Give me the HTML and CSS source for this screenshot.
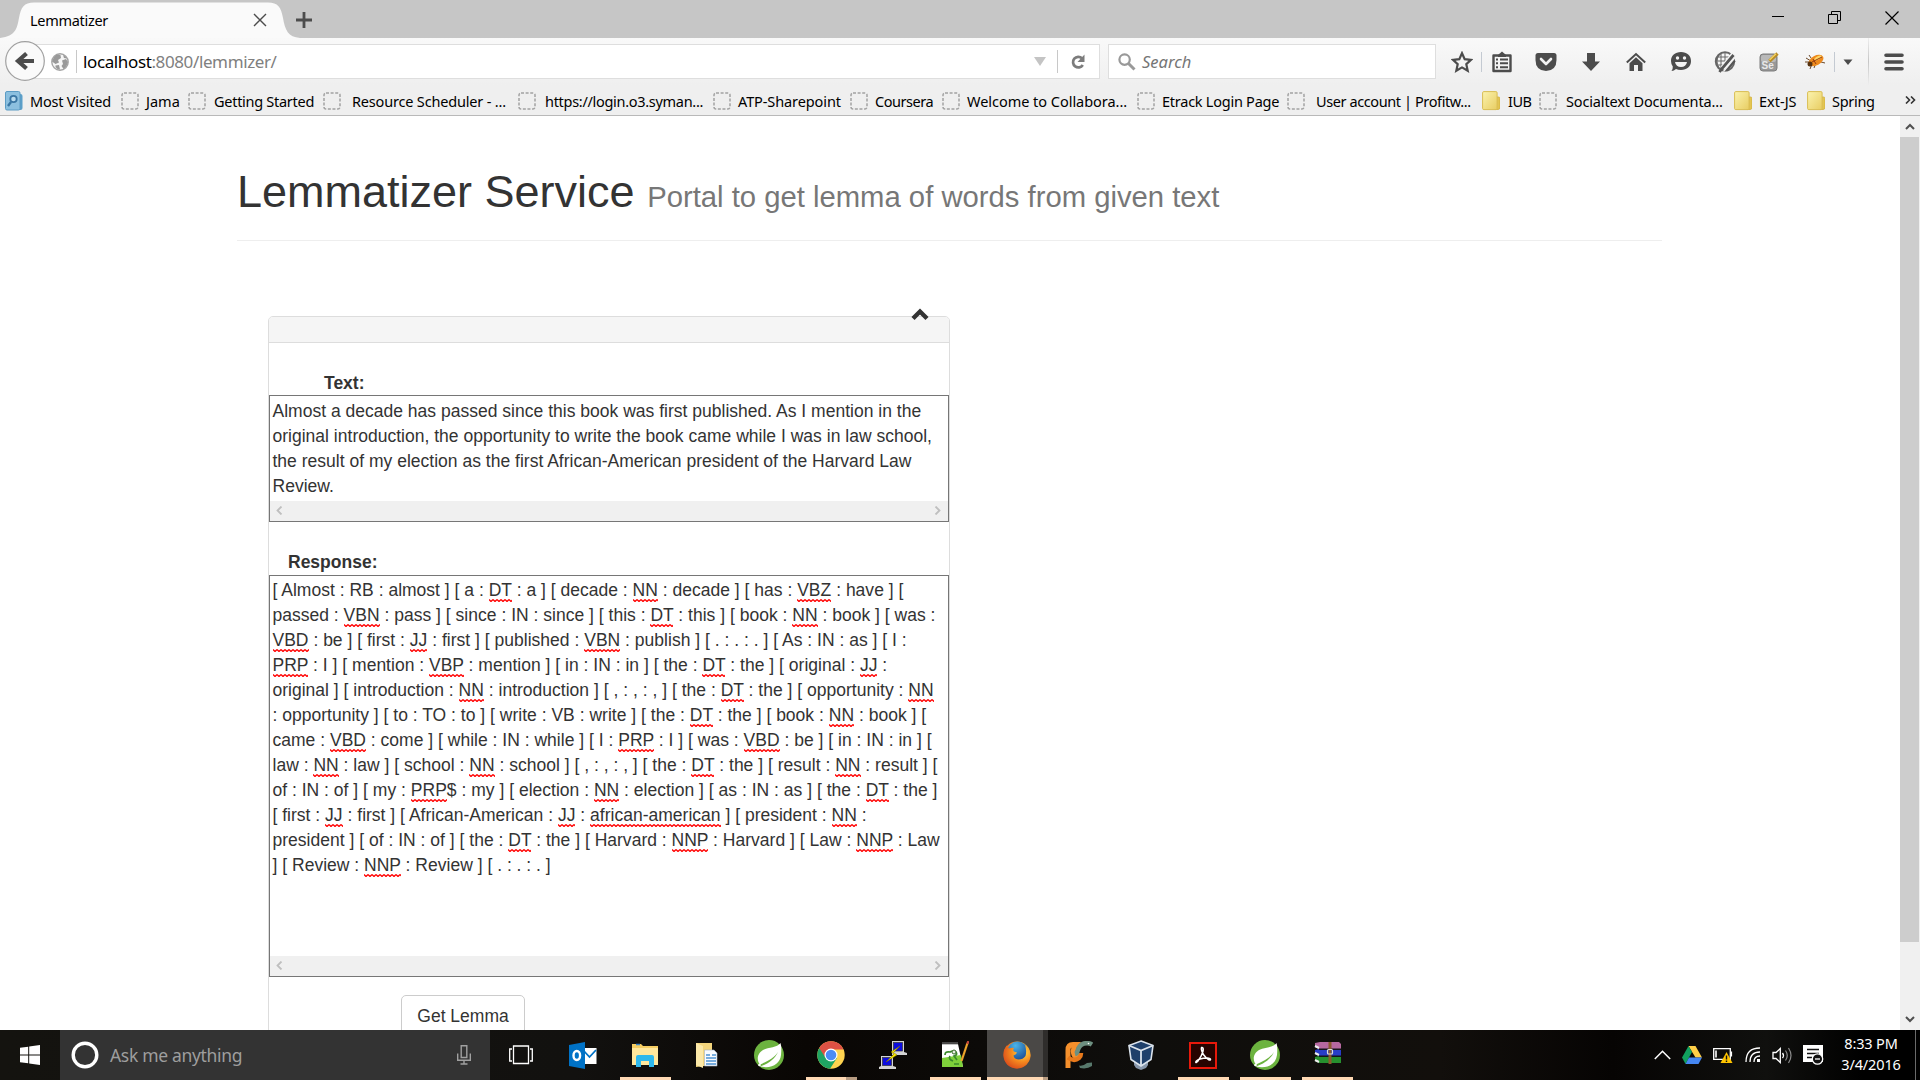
FILE: index.html
```html
<!DOCTYPE html>
<html lang="en">
<head>
<meta charset="utf-8">
<title>Lemmatizer</title>
<link rel="stylesheet" href="styles.css">
</head>
<body>
<svg class="defs" width="0" height="0">
  <defs>
    <linearGradient id="fold" x1="0" y1="0" x2="1" y2="1"><stop offset="0" stop-color="#fbf3ae"/><stop offset="1" stop-color="#e8cd62"/></linearGradient>
    <radialGradient id="fox" cx=".7" cy=".3" r=".9"><stop offset="0" stop-color="#ffe14a"/><stop offset=".45" stop-color="#f58a1f"/><stop offset="1" stop-color="#d13a1a"/></radialGradient>
    <radialGradient id="globe" cx=".4" cy=".2" r=".9"><stop offset="0" stop-color="#4bb4e8"/><stop offset="1" stop-color="#123a86"/></radialGradient>
    <symbol id="folder" viewBox="0 0 18 20"><path d="M14 6h2.500q1.500 0 1.500 1.500v9q0 2-2 2h-3z" fill="#e3c552" stroke="#cfae3e" stroke-width=".8"/><rect x=".6" y=".6" width="14.500" height="18" rx="1.200" fill="url(#fold)" stroke="#d9bd52" stroke-width="1"/></symbol>
    <symbol id="blank" viewBox="0 0 18 18"><rect x="1" y="1" width="16" height="16" rx="2" fill="none" stroke="#a3a3a3" stroke-width="1.500" stroke-dasharray="3 1.600"/></symbol>
    <symbol id="leaf" viewBox="0 0 30 30"><circle cx="15" cy="15" r="15" fill="#6cb33f"/><path d="M26.500 3C23 8 15 7 9 10C1 15 4 23 6 24.500C14 21 20 18 24 12C21 19 14 24 6 26.500C18 29 26 24 27 15C27.500 10 27.500 6 26.500 3Z" fill="#fff"/><circle cx="5.500" cy="25" r="1.300" fill="#fff"/></symbol>
  </defs>
</svg>
<div class="screen">
  <header class="titlebar">
    <div class="tab">
      <svg class="tab-shape" width="304" height="38" viewBox="0 0 304 38"><path d="M0 38C16 36 17 28 19 18C21 7 24 2.500 34 2.500H268C278 2.500 281 7 283 18C285 30 288 37 300 38Z" fill="#fafafa"/></svg>
      <span class="tab-title">Lemmatizer</span>
      <svg class="tab-close" width="14" height="14" viewBox="0 0 14 14"><path d="M1 1L13 13M13 1L1 13" stroke="#4c4c4c" stroke-width="1.400"/></svg>
    </div>
    <svg class="new-tab" width="16" height="16" viewBox="0 0 16 16"><path d="M8 0V16M0 8H16" stroke="#4c4c4c" stroke-width="2.800"/></svg>
    <div class="win-controls">
      <svg width="12" height="11" viewBox="0 0 12 11"><path d="M0 5.500H12" stroke="#000"/></svg>
      <svg width="13" height="13" viewBox="0 0 13 13"><path d="M.5 3.500H9.500V12.500H.5ZM3.500 3V.5H12.500V9.500H10" fill="none" stroke="#000"/></svg>
      <svg width="14" height="14" viewBox="0 0 14 14"><path d="M.5 .5L13.500 13.500M13.500 .5L.5 13.500" stroke="#000" stroke-width="1.200"/></svg>
    </div>
  </header>

  <div class="navbar">
    <svg class="back" width="42" height="42" viewBox="0 0 42 42"><circle cx="21" cy="21" r="19.300" fill="#fafafa" stroke="#a0a0a0" stroke-width="1.200"/><path d="M22.500 13.500L14 21L22.500 28.500M14.500 21H30" fill="none" stroke="#4c4c4c" stroke-width="4.200"/></svg>
    <div class="urlbar">
      <svg class="site" width="18" height="18" viewBox="0 0 18 18"><circle cx="9" cy="9" r="8.200" fill="#f5f5f5" stroke="#a5a5a5" stroke-width="1.400"/><path d="M3 4Q6 .5 9.500 2L10 5L7 7L8 9.500L4.500 11L1 8.500ZM11 7.500L15 6L17 9Q16 14 12.500 16L10.500 13L12 11ZM4.500 12.500L8 12L9 16.500Q6 16.500 4.500 14ZM12 2Q15 3 16 5.500L13 5Z" fill="#999"/></svg>
      <span class="sep"></span>
      <span class="url"><span class="host">localhost</span>:8080/lemmizer/</span>
      <svg class="drop" width="12" height="9" viewBox="0 0 12 9"><path d="M0 0H12L6 9Z" fill="#c4c4c4"/></svg>
      <span class="sep"></span>
      <svg class="reload" width="16" height="16" viewBox="0 0 16 16"><path d="M12 4.300A5.300 5.300 0 1 0 12.800 11" fill="none" stroke="#7c7c7c" stroke-width="2.700"/><path d="M14.500 .5V8H7.500Z" fill="#7c7c7c"/></svg>
    </div>
    <div class="searchbox">
      <svg width="18" height="18" viewBox="0 0 18 18"><circle cx="6.600" cy="6.600" r="5.200" fill="none" stroke="#999" stroke-width="2.200"/><path d="M10.500 10.500L16.500 16.500" stroke="#999" stroke-width="3"/></svg>
      <span>Search</span>
    </div>
    <div class="tools">
      <svg class="t-star" width="22" height="22" viewBox="0 0 22 22"><path d="M11 2.200L13.700 8.200L20 8.900L15.300 13.200L16.700 19.700L11 16.400L5.300 19.700L6.700 13.200L2 8.900L8.300 8.200Z" fill="none" stroke="#4c4c4c" stroke-width="2.200"/></svg>
      <span class="tsep"></span>
      <svg class="t-list" width="20" height="22" viewBox="0 0 20 22"><path d="M1.500 4.500H18.500V20H1.500Z" fill="none" stroke="#4c4c4c" stroke-width="2.400" stroke-linejoin="round"/><path d="M6 4L10 .5L14 4V6H6Z" fill="#4c4c4c"/><path d="M4 8.500H6M8 8.500H16M4 12.300H6M8 12.300H16M4 16.300H6M8 16.300H16" stroke="#4c4c4c" stroke-width="2"/></svg>
      <svg class="t-pocket" width="22" height="20" viewBox="0 0 22 20"><path d="M3 1H19Q21.500 1 21.500 3.500V8Q21.500 18.500 11 19Q.5 18.500 .5 8V3.500Q.5 1 3 1Z" fill="#4c4c4c"/><path d="M6 7L11 12L16 7" fill="none" stroke="#f3f3f3" stroke-width="2.600" stroke-linecap="round" stroke-linejoin="round"/></svg>
      <svg class="t-down" width="20" height="20" viewBox="0 0 20 20"><path d="M6 1H14V9.500H19L10 19L1 9.500H6Z" fill="#4c4c4c"/></svg>
      <svg class="t-home" width="20" height="20" viewBox="0 0 20 20"><path d="M.8 10.500L10 2L19.200 10.500" fill="none" stroke="#4c4c4c" stroke-width="2"/><path d="M10 5.200L16.500 11.200V19H12V13H8V19H3.500V11.200Z" fill="#4c4c4c"/></svg>
      <svg class="t-smile" width="22" height="21" viewBox="0 0 22 21"><path d="M11 1C17 1 21 4.500 21 10C21 15.500 17 19 11 19Q8 19 6 18Q4 19.800 1.500 20Q3 18 2.800 15.500Q1 13 1 10C1 4.500 5 1 11 1Z" fill="#4c4c4c"/><circle cx="7.500" cy="7" r="1.700" fill="#f3f3f3"/><circle cx="14.500" cy="7" r="1.700" fill="#f3f3f3"/><path d="M5 11H17Q16 16 11 16Q6 16 5 11Z" fill="#f3f3f3"/></svg>
      <svg class="t-globe" width="22" height="22" viewBox="0 0 22 22"><circle cx="11" cy="10.500" r="9.200" fill="none" stroke="#666" stroke-width="2"/><path d="M3 6H17M2 10H15M3 14H12M7 2V18M11 1V14M5 4Q1 10 5 17" stroke="#666" fill="none" stroke-width="1"/><path d="M20 3L9 17" stroke="#f3f3f3" stroke-width="5.500"/><path d="M19.500 4L8 17.500L5.500 21M20.500 9.500L12 19.500" fill="none" stroke="#555" stroke-width="2.800"/><path d="M21 6.500L9.500 20.500" stroke="#f3f3f3" stroke-width="1.300"/></svg>
      <svg class="t-se" width="20" height="20" viewBox="0 0 20 20"><rect x="1" y="2" width="17" height="17" rx="3" fill="#989898" stroke="#7d7d7d"/><rect x="2" y="3" width="15" height="7" rx="2" fill="#b9b9b9"/><text x="2.500" y="16.500" class="se">Se</text><path d="M18.500 1.500L10.500 9" stroke="#b98b24" stroke-width="3.400"/><path d="M17 1.800L10.500 8" stroke="#f6d563" stroke-width="1.300"/></svg>
      <svg class="t-bug" width="22" height="18" viewBox="0 0 22 18"><path d="M1 9H7M2 5L7 8M6 16L8 11M10 15L12 10M13 8L21 10M7 5L5 2" stroke="#6d4a2b" stroke-width="1"/><ellipse cx="12" cy="7.500" rx="8" ry="4.800" transform="rotate(-28 12 7.500)" fill="#ee8a1d"/><ellipse cx="14" cy="5" rx="4" ry="1.800" transform="rotate(-28 14 5)" fill="#ffd766"/><circle cx="6" cy="11" r="2.500" fill="#57320f"/><path d="M8 9L18 4M9 6L12 11" stroke="#953c10"/></svg>
      <span class="tsep"></span>
      <svg class="t-arrow" width="10" height="6" viewBox="0 0 10 6"><path d="M.5 .5H9.500L5 6Z" fill="#4c4c4c"/></svg>
      <span class="tsep tall"></span>
      <svg class="t-menu" width="20" height="18" viewBox="0 0 20 18"><path d="M2 2.200H18M2 9H18M2 15.800H18" stroke="#4c4c4c" stroke-width="3.600" stroke-linecap="round"/></svg>
    </div>
  </div>

  <nav class="bookmarks">
    <div class="bm b1"><svg width="18" height="20" viewBox="0 0 18 20"><rect x="5" y="3" width="12.500" height="16" rx="2" fill="#5b9fc9"/><rect x=".5" y=".5" width="14.500" height="18.500" rx="1.500" fill="#8cc0df" stroke="#5c9cc4"/><circle cx="8.500" cy="8" r="3.200" fill="#b9dcef" stroke="#3a76a3" stroke-width="1.800"/><path d="M6 11L3 15" stroke="#3a76a3" stroke-width="2.400"/></svg><span>Most Visited</span></div>
    <div class="bm b2"><svg width="18" height="18"><use href="#blank"/></svg><span>Jama</span></div>
    <div class="bm b3"><svg width="18" height="18"><use href="#blank"/></svg><span>Getting Started</span></div>
    <div class="bm wide b4"><svg width="18" height="18"><use href="#blank"/></svg><span>Resource Scheduler - ...</span></div>
    <div class="bm b5"><svg width="18" height="18"><use href="#blank"/></svg><span>https://login.o3.syman...</span></div>
    <div class="bm b6"><svg width="18" height="18"><use href="#blank"/></svg><span>ATP-Sharepoint</span></div>
    <div class="bm b7"><svg width="18" height="18"><use href="#blank"/></svg><span>Coursera</span></div>
    <div class="bm b8"><svg width="18" height="18"><use href="#blank"/></svg><span>Welcome to Collabora...</span></div>
    <div class="bm b9"><svg width="18" height="18"><use href="#blank"/></svg><span>Etrack Login Page</span></div>
    <div class="bm wide b10"><svg width="18" height="18"><use href="#blank"/></svg><span>User account | Profitw...</span></div>
    <div class="bm b11"><svg width="18" height="20"><use href="#folder"/></svg><span>IUB</span></div>
    <div class="bm b12"><svg width="18" height="18"><use href="#blank"/></svg><span>Socialtext Documenta...</span></div>
    <div class="bm b13"><svg width="18" height="20"><use href="#folder"/></svg><span>Ext-JS</span></div>
    <div class="bm b14"><svg width="18" height="20"><use href="#folder"/></svg><span>Spring</span></div>
    <svg class="more" width="11" height="8" viewBox="0 0 11 8"><path d="M1 .5L4.500 4L1 7.500M6 .5L9.500 4L6 7.500" fill="none" stroke="#333" stroke-width="1.600"/></svg>
  </nav>

  <div class="viewport">
    <main class="page">
      <div class="page-header"><h1>Lemmatizer Service <small>Portal to get lemma of words from given text</small></h1></div>
      <section class="panel">
        <div class="panel-heading"><svg class="caret" width="18" height="13" viewBox="0 0 18 13"><path d="M2 10.500L9 3.500L16 10.500" fill="none" stroke="#333" stroke-width="4.400"/></svg></div>
        <label class="lbl lbl-text">Text:</label>
        <div class="area area-text">
          <div class="lines">
            <p>Almost a decade has passed since this book was first published. As I mention in the</p>
            <p>original introduction, the opportunity to write the book came while I was in law school,</p>
            <p>the result of my election as the first African-American president of the Harvard Law</p>
            <p>Review.</p>
          </div>
          <div class="hscroll"><svg width="7" height="9" viewBox="0 0 7 9"><path d="M5.500 .5L1.500 4.500L5.500 8.500" fill="none" stroke="#bfbfbf" stroke-width="1.800"/></svg><svg width="7" height="9" viewBox="0 0 7 9"><path d="M1.500 .5L5.500 4.500L1.500 8.500" fill="none" stroke="#bfbfbf" stroke-width="1.800"/></svg></div>
        </div>
        <label class="lbl lbl-resp">Response:</label>
        <div class="area area-resp">
          <div class="lines">
            <p>[ Almost : RB : almost ] [ a : <u>DT</u> : a ] [ decade : <u>NN</u> : decade ] [ has : <u>VBZ</u> : have ] [</p>
            <p>passed : <u>VBN</u> : pass ] [ since : IN : since ] [ this : <u>DT</u> : this ] [ book : <u>NN</u> : book ] [ was :</p>
            <p><u>VBD</u> : be ] [ first : <u>JJ</u> : first ] [ published : <u>VBN</u> : publish ] [ . : . : . ] [ As : IN : as ] [ I :</p>
            <p><u>PRP</u> : I ] [ mention : <u>VBP</u> : mention ] [ in : IN : in ] [ the : <u>DT</u> : the ] [ original : <u>JJ</u> :</p>
            <p>original ] [ introduction : <u>NN</u> : introduction ] [ , : , : , ] [ the : <u>DT</u> : the ] [ opportunity : <u>NN</u></p>
            <p>: opportunity ] [ to : TO : to ] [ write : VB : write ] [ the : <u>DT</u> : the ] [ book : <u>NN</u> : book ] [</p>
            <p>came : <u>VBD</u> : come ] [ while : IN : while ] [ I : <u>PRP</u> : I ] [ was : <u>VBD</u> : be ] [ in : IN : in ] [</p>
            <p>law : <u>NN</u> : law ] [ school : <u>NN</u> : school ] [ , : , : , ] [ the : <u>DT</u> : the ] [ result : <u>NN</u> : result ] [</p>
            <p>of : IN : of ] [ my : <u>PRP</u>$ : my ] [ election : <u>NN</u> : election ] [ as : IN : as ] [ the : <u>DT</u> : the ]</p>
            <p>[ first : <u>JJ</u> : first ] [ African-American : <u>JJ</u> : <u>african-american</u> ] [ president : <u>NN</u> :</p>
            <p>president ] [ of : IN : of ] [ the : <u>DT</u> : the ] [ Harvard : <u>NNP</u> : Harvard ] [ Law : <u>NNP</u> : Law</p>
            <p>] [ Review : <u>NNP</u> : Review ] [ . : . : . ]</p>
          </div>
          <div class="hscroll"><svg width="7" height="9" viewBox="0 0 7 9"><path d="M5.500 .5L1.500 4.500L5.500 8.500" fill="none" stroke="#bfbfbf" stroke-width="1.800"/></svg><svg width="7" height="9" viewBox="0 0 7 9"><path d="M1.500 .5L5.500 4.500L1.500 8.500" fill="none" stroke="#bfbfbf" stroke-width="1.800"/></svg></div>
        </div>
        <button class="btn">Get Lemma</button>
      </section>
    </main>
    <div class="vscroll">
      <svg width="10" height="7" viewBox="0 0 10 7"><path d="M1 6L5 2L9 6" fill="none" stroke="#505050" stroke-width="2"/></svg>
      <div class="thumb"></div>
      <svg width="10" height="7" viewBox="0 0 10 7"><path d="M1 1L5 5L9 1" fill="none" stroke="#505050" stroke-width="2"/></svg>
    </div>
  </div>

  <footer class="taskbar">
    <div class="start"><svg width="20" height="20" viewBox="0 0 20 20"><path d="M0 2.800L8.200 1.700V9.500H0ZM9.200 1.500L20 0V9.500H9.200ZM0 10.500H8.200V18.300L0 17.200ZM9.200 10.500H20V20L9.200 18.500Z" fill="#fff"/></svg></div>
    <div class="cortana">
      <svg width="28" height="28" viewBox="0 0 28 28"><circle cx="14" cy="14" r="11.800" fill="none" stroke="#fff" stroke-width="3.400"/></svg>
      <span>Ask me anything</span>
      <svg class="mic" width="14" height="20" viewBox="0 0 14 20"><path d="M4.200 .7H9.800V12.500H4.200ZM.7 8.500V15.300H13.300V8.500M7 15.500V19M3.500 19H10.500" fill="none" stroke="#a0a0a0" stroke-width="1.400"/></svg>
    </div>
    <div class="apps">
      <div class="app"><svg width="24" height="20" viewBox="0 0 24 20"><path d="M4.500 1H19.500V18.500H4.500ZM3 4H.7V16H3M21 4H23.300V16H21" fill="none" stroke="#fff" stroke-width="1.300"/></svg></div>
      <div class="app"><svg width="28" height="27" viewBox="0 0 28 27"><rect x="13" y="6" width="14.500" height="16" fill="#fff"/><path d="M14 8L20.500 15L27 8" fill="none" stroke="#0072c6" stroke-width="1.800"/><path d="M0 3L16 0V27L0 24Z" fill="#0072c6"/><ellipse cx="7.800" cy="13.500" rx="3.300" ry="4.500" fill="none" stroke="#fff" stroke-width="2.400"/></svg></div>
      <div class="app run"><svg width="28" height="24" viewBox="0 0 28 24"><path d="M1 1H10L12 3H27V22H1Z" fill="#f5cd62"/><path d="M1 5H27V22H1Z" fill="#ffe79c"/><path d="M5 24V14Q5 12 7 12H21Q23 12 23 14V24H18V18H10V24Z" fill="#2eb8ec"/><path d="M5 1.500H9" stroke="#3b86c8" stroke-width="1.500"/></svg></div>
      <div class="app"><svg width="24" height="26" viewBox="0 0 24 26"><path d="M1 1H17V23L1 25Z" fill="#f3d57c"/><path d="M1 1L8 4V26L1 23Z" fill="#fbe8a8"/><path d="M9.500 8H19L22 11V24H9.500Z" fill="#f8fbff" stroke="#a2b4c7" stroke-width=".6"/><path d="M11 13H15M11 16H21M11 19H21M11 22H21M17 13H21" stroke="#4d94d4" stroke-width="1.500"/></svg></div>
      <div class="app"><svg width="30" height="30"><use href="#leaf"/></svg></div>
      <div class="app run split"><svg width="28" height="28" viewBox="0 0 28 28"><circle cx="14" cy="14" r="13.700" fill="#ffd34f"/><path d="M14 14L2.200 7A13.700 13.700 0 0 0 13 27.700L20 17Z" fill="#1fa463"/><path d="M2.200 7A13.700 13.700 0 0 1 26.500 8.500H14L8 16Z" fill="#dd5144"/><circle cx="14" cy="14" r="6.500" fill="#fff"/><circle cx="14" cy="14" r="5.300" fill="#4c8bf5"/></svg></div>
      <div class="app"><svg width="28" height="28" viewBox="0 0 28 28"><path d="M13 0H25V11L28 12V14H13Z" fill="#d4d4d4"/><rect x="14.500" y="1.500" width="9" height="8.500" fill="#0c0ce0" stroke="#333" stroke-width=".7"/><path d="M2 15H14V25L17 26V28H0V26L2 25Z" fill="#d4d4d4"/><rect x="3.500" y="16.500" width="9" height="8" fill="#0c0ce0" stroke="#333" stroke-width=".7"/><path d="M21 5L12 11L15 13L7 21L18 14L14.500 11.500Z" fill="#f8e800" stroke="#786b00" stroke-width=".5"/></svg></div>
      <div class="app run"><svg width="28" height="28" viewBox="0 0 28 28"><path d="M1 3H17L22 26H1Z" fill="#fff"/><path d="M1 17L20 14L22 26H1Z" fill="#7fd13a"/><path d="M1.500 2.500H17" stroke="#888" stroke-width="3" stroke-dasharray="1 1"/><path d="M4 14Q4 10 9 11Q12 9 15 11Q17 14 13 15L16 19M9 15Q7 18 12 20M13 23H18" fill="none" stroke="#3b8b2b" stroke-width="1.700"/><circle cx="13" cy="11" r="2" fill="#e5efe0" stroke="#3b6b2b"/><path d="M26.500 2L20.500 20" stroke="#eca42b" stroke-width="2.200"/><path d="M27.300 0L26.300 3" stroke="#c4483a" stroke-width="2.200"/></svg></div>
      <div class="app run active"><svg width="28" height="28" viewBox="0 0 28 28"><circle cx="14" cy="14" r="13.500" fill="url(#fox)"/><circle cx="14.500" cy="10.800" r="10.200" fill="url(#globe)"/><path d="M1 9L3.500 4.500L6 7.500Q8.500 6.500 11 7Q9.500 9 11 10.500L14 11.500Q13.500 13.500 10.500 14.500Q11 18 15.500 18.500Q20 18.500 22.500 15Q24 9 22 4.500Q28 9 27.300 15.500Q25.500 26.500 14 27.500Q2 26.500 .6 15Q.4 12 1 9Z" fill="url(#fox)"/></svg></div>
      <div class="app"><svg width="28" height="28" viewBox="0 0 28 28"><path d="M3 27V9Q3 3.500 8 3.500H11Q7.500 8 8.500 12Q9 15 11.500 15.500Q14 15 15 13" fill="none" stroke="#f5902c" stroke-width="5"/><path d="M3 16.500Q9 21 14 17Q16 15 16 12" fill="none" stroke="#e8791b" stroke-width="4.500"/><path d="M27 3.500Q24 1.500 19 2.500Q14 4 12.500 10Q12 12.500 10 13" fill="none" stroke="#6d8f80" stroke-width="4.600"/><path d="M14 24.500Q18 25.500 22 22L27 21.500V25Q22 28.500 15 27Z" fill="#58796c"/><circle cx="23.500" cy="2.500" r=".8" fill="#fff"/></svg></div>
      <div class="app"><svg width="26" height="30" viewBox="0 0 26 30"><path d="M6 20L13 16L20 20V25L18 28L13 30L8 28L6 25Z" fill="#8797ab"/><path d="M13 1L25 5.500L23 19.500L13 26L3 19.500L1 5.500Z" fill="#1f406b" stroke="#dbe3ec" stroke-width="1.600"/><path d="M1 5.500L13 10.500L25 5.500M13 10.500V26" fill="none" stroke="#dbe3ec" stroke-width="1.800"/></svg></div>
      <div class="app run"><svg width="28" height="27" viewBox="0 0 28 27"><rect x="1" y="1" width="26" height="25" fill="#260300" stroke="#e8190b" stroke-width="2"/><path d="M12.500 5.500C16 5 14 12 9 19C6 22.500 5.500 19 11 17C16 15.500 21.500 15.500 21.500 17.500C21 20 14 14 12.800 9Q12 6.500 12.500 5.500Z" fill="none" stroke="#fff" stroke-width="1.500"/></svg></div>
      <div class="app run"><svg width="30" height="30"><use href="#leaf"/></svg></div>
      <div class="app run"><svg class="rar" width="27" height="22" viewBox="0 0 27 22"><path d="M1 1L6 0H25L27 2V7H5L1 5Z" fill="#b668a0"/><path d="M1 8L5 7H27V14H5L1 12Z" fill="#283dc8"/><path d="M1 15L5 14H27V21H5L1 19Z" fill="#26902e"/><path d="M1 4L5 6M1 11L5 13M1 18L5 20" stroke="#eee" stroke-width="2"/><path d="M5 7.300H27M5 14.300H27" stroke="#15151c" stroke-width="1.500"/><path d="M14.500 0H17.500V22H14.500Z" fill="#8b5a2d"/><rect x="13.500" y="7.500" width="5" height="4.500" rx="1" fill="none" stroke="#ddd" stroke-width="1.200"/></svg></div>
    </div>
    <div class="tray">
      <svg class="y1" width="17" height="10" viewBox="0 0 17 10"><path d="M.8 9L8.500 1.300L16.200 9" fill="none" stroke="#fff" stroke-width="1.500"/></svg>
      <svg class="y2" width="20" height="18" viewBox="0 0 20 18"><path d="M6.500 0H13.500L20 11.500H13.500Z" fill="#ffcf48"/><path d="M6.500 0L10 6L3.500 18L0 11.500Z" fill="#11a05e"/><path d="M7 11.500H20L16.500 18H3.500Z" fill="#4587f3"/></svg>
      <svg class="y3" width="20" height="16" viewBox="0 0 20 16"><path d="M.7 1.700H17.300V12.300H.7Z" fill="none" stroke="#fff" stroke-width="1.300"/><path d="M18.500 4.500V9.500" stroke="#fff" stroke-width="1.200"/><path d="M3 3.500V10.500" stroke="#fff" stroke-width="1.600"/><path d="M13.500 5L19.500 16H7.500Z" fill="#ffc400"/><path d="M13.500 8.500V12.500M13.500 13.500V15" stroke="#111" stroke-width="1.400"/></svg>
      <svg class="y4" width="16" height="16" viewBox="0 0 16 16"><path d="M1 15Q1 1 15 1M5 15Q5 5 15 5M9 15Q9 9 15 9" fill="none" stroke="#fff" stroke-width="1.300"/><rect x="12" y="12" width="3" height="3" fill="#fff"/></svg>
      <svg class="y5" width="21" height="17" viewBox="0 0 21 17"><path d="M1 5.500H4L8.300 1.500V15.500L4 11.500H1Z" fill="none" stroke="#fff" stroke-width="1.300"/><path d="M10.500 6Q12.500 8.500 10.500 11" fill="none" stroke="#fff" stroke-width="1.300"/><path d="M13.500 3.500Q17 8.500 13.500 13.500M16.500 1Q21.500 8.500 16.500 16" fill="none" stroke="#8c8c8c" stroke-width="1.200"/></svg>
      <svg class="y6" width="21" height="20" viewBox="0 0 21 20"><path d="M0 0H20V17H0Z" fill="#fff"/><path d="M4 4.500H16M4 8.500H16M4 12.500H9" stroke="#111" stroke-width="1.300"/><circle cx="14.500" cy="14" r="5.200" fill="#111" stroke="#fff" stroke-width="1.300"/><path d="M12 14H17" stroke="#fff" stroke-width="1.300"/></svg>
      <div class="clock"><span>8:33 PM</span><span>3/4/2016</span></div>
      <span class="peek"></span>
    </div>
  </footer>
</div>
</body>
</html>
```
FILE: styles.css
```css
* { box-sizing: border-box; }
body { margin: 0; background: #fff; overflow: hidden; }
svg { display: block; flex: none; }
.defs { position: absolute; }

.screen { display: flex; flex-direction: column; width: 1920px; height: 1080px; overflow: hidden; font-family: "Noto Sans", "Open Sans", sans-serif; }

/* Title bar */
.titlebar { display: flex; height: 38px; background: #c6c6c6; }
.tab { position: relative; display: flex; align-items: center; width: 296px; padding: 2px 29px 0 30px; justify-content: space-between; }
.tab-shape { position: absolute; left: 0; top: 0; }
.tab-title { position: relative; font-size: 14.5px; letter-spacing: -0.3px; }
.tab-close { position: relative; }
.new-tab { margin-top: 12px; }
.win-controls { display: flex; gap: 44px; margin: 11px 21px 0 auto; }

/* Navigation toolbar */
.navbar { display: flex; height: 47px; background: linear-gradient(#f9f9f9, #efefef); }
.back { position: relative; margin: 2px 0 0 4px; }
.urlbar { display: flex; align-items: center; width: 1070px; height: 35px; margin: 6px 8px 0 -16px; padding: 0 13px 0 20px; background: #fff; border: 1px solid #dedede; }
.sep { width: 1px; height: 23px; background: #c8c8c8; }
.site { margin-right: 7px; }
.url { margin-left: 6px; flex: 1; font-size: 17px; letter-spacing: -0.38px; color: #808080; white-space: nowrap; }
.host { color: #000; }
.drop { margin-right: 11px; }
.reload { margin-left: 12px; }
.searchbox { display: flex; align-items: center; width: 328px; height: 35px; margin-top: 6px; padding-left: 9px; gap: 6px; background: #fff; border: 1px solid #dedede; font-size: 16.5px; font-style: italic; color: #757575; }
.tools { display: flex; align-items: center; flex: 1; height: 47px; }
.t-star { margin-left: 15px; }
.tsep { width: 1px; height: 20px; margin-left: 8px; background: #c4cad2; }
.t-list { margin-left: 10px; }
.t-pocket { margin-left: 23px; }
.t-down { margin-left: 24px; }
.t-home { margin-left: 25px; }
.t-smile { margin-left: 24px; }
.t-globe { margin-left: 22px; }
.t-se { margin-left: 23px; }
.t-bug { margin-left: 25px; }
.t-arrow { margin-left: 8px; }
.tsep.tall { height: 47px; margin-left: 15px; background: linear-gradient(#eee, #c6c6c6 50%, #eee); }
.t-menu { margin-left: 15px; }
.se { font: bold 10px "Liberation Sans", sans-serif; fill: #e8e8e8; }

/* Bookmarks toolbar */
.bookmarks { display: flex; height: 31px; padding-left: 5px; background: #efefef; border-bottom: 1px solid #b9b9b9; font-size: 14.5px; }
.bm { display: flex; align-items: center; height: 31px; white-space: nowrap; gap: 7px; }
.bm.wide { gap: 11px; }
.b1 { width: 116px; letter-spacing: -0.2px; }
.b2 { width: 67px; }
.b3 { width: 135px; gap: 8px; letter-spacing: -0.28px; }
.b4 { width: 195px; letter-spacing: -0.18px; }
.b5 { width: 195px; gap: 9px; letter-spacing: -0.3px; }
.b6 { width: 137px; letter-spacing: -0.1px; }
.b7 { width: 92px; letter-spacing: -0.45px; }
.b8 { width: 195px; letter-spacing: -0.03px; }
.b9 { width: 150px; letter-spacing: -0.25px; }
.b10 { width: 195px; letter-spacing: -0.4px; }
.b11 { width: 57px; gap: 8px; letter-spacing: -0.5px; }
.b12 { width: 195px; gap: 9px; letter-spacing: -0.15px; }
.b13 { width: 73px; }
.b14 { width: 98px; letter-spacing: -0.3px; }
.more { margin-top: 11px; }

/* Page */
.viewport { display: flex; flex: 1; min-height: 0; background: #fff; overflow: hidden; }
.page { flex: 1; padding: 51px 238px 0 237px; font-family: "Liberation Sans", Arial, sans-serif; font-size: 17.5px; line-height: 25px; color: #333; }
.page-header { height: 74px; border-bottom: 1px solid #eee; }
h1 { margin: 0; font-size: 45px; line-height: 50px; font-weight: 500; white-space: nowrap; }
small { font-size: 29.25px; font-weight: 400; color: #777; }
.panel { width: 682px; height: 760px; margin: 75px 0 0 31px; border: 1px solid #ddd; border-radius: 5px; }
.panel-heading { height: 26px; background: #f5f5f5; border-bottom: 1px solid #ddd; border-radius: 4px 4px 0 0; position: relative; }
.caret { position: absolute; left: 642px; top: -9px; }
.lbl { display: block; height: 25px; font-weight: 700; }
.lbl-text { height: 24px; margin: 28px 0 0 55px; }
.lbl-resp { margin: 28px 0 0 19px; }
.area { display: flex; flex-direction: column; justify-content: space-between; width: 680px; border: 1px solid #767676; }
.area-text { height: 127px; }
.area-resp { height: 402px; }
.lines { padding: 3px 0 0 2.5px; white-space: nowrap; letter-spacing: 0.01px; }
.area-resp .lines { padding-top: 2px; }
.lines p { margin: 0; height: 25px; }
u { text-decoration: none; padding-bottom: 2px; background: url("data:image/svg+xml,%3Csvg xmlns='http://www.w3.org/2000/svg' width='4' height='3'%3E%3Cpath d='M0 .5L2 2.500L4 .5' fill='none' stroke='%23f00' stroke-width='1.300'/%3E%3C/svg%3E") repeat-x left bottom; }
.hscroll { display: flex; justify-content: space-between; align-items: center; height: 20px; padding: 0 7px 1px 6px; background: #f0f0f0; }
.btn { display: block; width: 124px; height: 43px; margin: 18px 0 0 132px; padding: 0; background: #fff; border: 1px solid #ccc; border-radius: 5px; font: 17.5px/25px "Liberation Sans", Arial, sans-serif; color: #333; }
.vscroll { display: flex; flex-direction: column; align-items: center; width: 20px; padding: 7px 0; background: #f0f0f0; }
.thumb { width: 19px; height: 805px; margin: 7px 1px auto 0; background: #cdcdcd; }

/* Taskbar */
.taskbar { display: flex; height: 50px; background: linear-gradient(90deg, #14130f, #12110f 30%, #090604 42%, #0f0e0c 60%, #120f0c 75%, #060403 84%, #10100e 92%, #000 97%); color: #fff; }
.start { display: flex; align-items: center; justify-content: center; width: 60px; }
.cortana { display: flex; align-items: center; width: 430px; padding: 0 19px 0 11px; gap: 11px; background: #333; color: #9e9e9e; font-size: 17.5px; letter-spacing: -0.32px; }
.mic { margin-left: auto; }
.apps { display: flex; }
.app { position: relative; display: flex; align-items: center; justify-content: center; width: 62px; height: 50px; }
.run::after { content: ""; position: absolute; left: 6px; bottom: 0; width: 51px; height: 3px; background: #ffd9b4; }
.split::after { background: linear-gradient(90deg, #ffd9b4 40px, #b89c82 40px); }
.active { background: linear-gradient(90deg, transparent 1px, #4a4846 1px, #4a4846 57px, #2f2d2b 57px); }
.active::after { left: 1px; width: 61px; background: linear-gradient(90deg, #ffd9b4 56px, #b89c82 56px); }
.rar { margin-bottom: 4px; }
.tray { display: flex; align-items: center; flex: 1; padding-left: 296px; }
.y2 { margin-left: 11px; }
.y3 { margin-left: 11px; }
.y4 { margin-left: 12px; }
.y5 { margin-left: 11px; }
.y6 { margin-left: 10px; }
.clock { display: flex; flex-direction: column; align-items: center; width: 62px; margin: 0 0 2px 16px; font-size: 14.5px; line-height: 21px; letter-spacing: -0.15px; }
.peek { width: 1px; height: 50px; margin-left: 13px; background: #6a6a6a; }
```
